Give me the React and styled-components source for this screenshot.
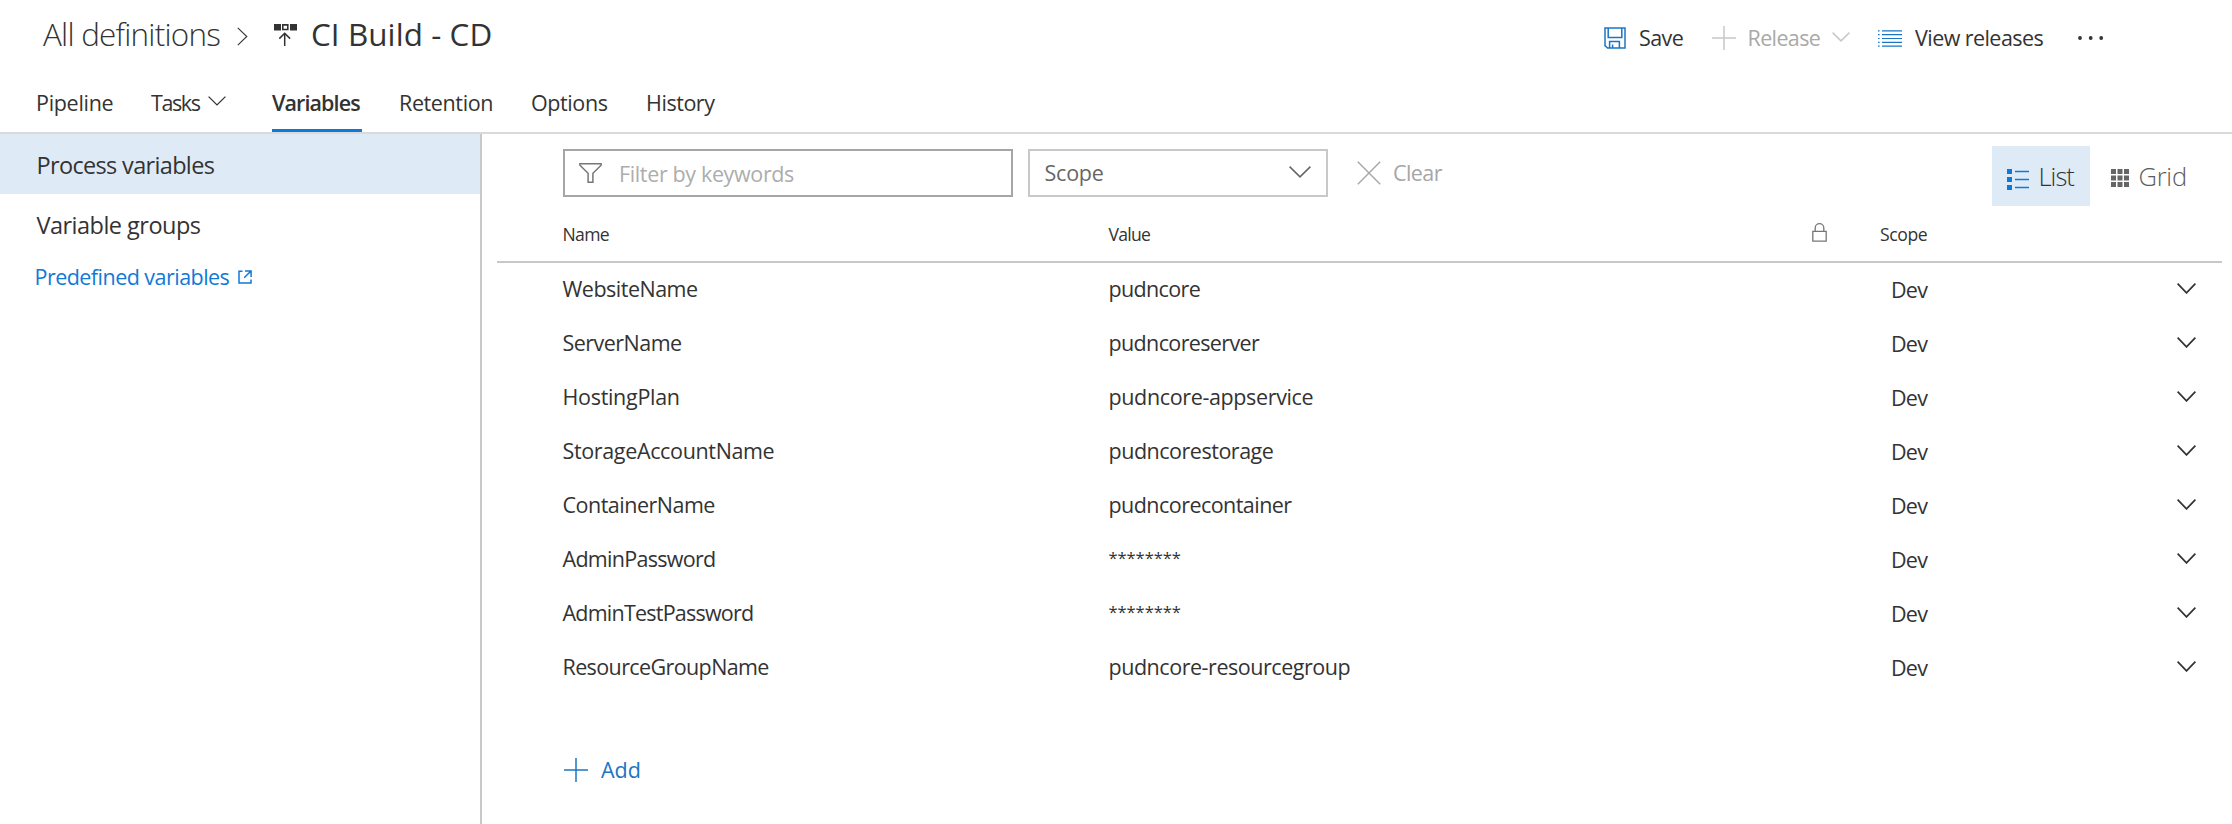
import React from "react";
import styled, { createGlobalStyle, css } from "styled-components";

const GlobalStyle = createGlobalStyle`
  *, *::before, *::after { box-sizing: border-box; }
  body {
    margin: 0;
    background: #fff;
    color: #333;
    font-family: "Open Sans", "Noto Sans", sans-serif;
    font-size: 21.5px;
    line-height: 1.3;
  }
  svg { display: block; flex: none; fill: none; stroke: currentColor; }
`;

const Page = styled.div`
  display: flex;
  flex-direction: column;
  width: 100%;
  height: 824px;
  overflow: hidden;
`;

const Label = styled.span`
  white-space: pre;
  letter-spacing: ${(p) => p.$track || 0}px;
`;

/* ---------- header ---------- */
const TopBar = styled.header`
  display: flex;
  justify-content: space-between;
  height: 72px;
  padding: 0 129px 0 43px;
`;

const Breadcrumb = styled.div`
  display: flex;
  align-items: center;
  height: 69px;
  font-size: 31.4px;
`;

const Crumb = styled(Label)`
  width: 194px;
  font-weight: 300;
`;

const CrumbArrow = styled.span`
  margin-top: 3px;
`;

const PipelineMark = styled.span`
  margin: 0 14px 0 26px;
`;

const Commands = styled.div`
  display: flex;
  align-items: center;
  margin-top: 4px;
`;

const Command = styled.button`
  display: flex;
  align-items: center;
  gap: ${(p) => p.$gap}px;
  width: ${(p) => p.$width}px;
  padding: 0;
  border: 0;
  background: none;
  font: inherit;
  color: ${(p) => (p.$disabled ? "#a9a9a9" : "#333")};
`;

const CommandIcon = styled.span`
  margin-top: ${(p) => p.$drop || 0}px;
  color: ${(p) => p.$color || "#1b75c5"};
`;

const Tabs = styled.nav`
  display: flex;
  gap: 37px;
  height: 62px;
  padding-left: 36px;
  border-bottom: 2px solid #dadada;
`;

const Tab = styled.a`
  display: flex;
  align-items: center;
  width: ${(p) => p.$width}px;
  padding-top: 4px;
  border-bottom: 3px solid transparent;
  ${(p) =>
    p.$active &&
    css`
      font-weight: 600;
      border-color: #1079d8;
    `}
`;

const TabChevron = styled.span`
  margin-left: auto;
  padding: 0 9px 3px 0;
`;

/* ---------- body ---------- */
const Body = styled.div`
  display: flex;
  flex: 1;
  min-height: 0;
`;

const Sidebar = styled.aside`
  width: 482px;
  border-right: 2px solid #c8c8c8;
`;

const SideItem = styled.div`
  display: flex;
  align-items: center;
  height: 60px;
  padding: 3px 0 0 36.5px;
  font-size: 23.5px;
  background: ${(p) => (p.$active ? "#deebf7" : "transparent")};
`;

const SideLink = styled.a`
  display: flex;
  align-items: center;
  gap: 9px;
  height: 46px;
  padding-left: 34.5px;
  color: #1079d8;
`;

const Main = styled.main`
  flex: 1;
  display: flex;
  flex-direction: column;
`;

const Filters = styled.div`
  display: flex;
  height: 72px;
  padding: 12px 24px 0 81px;
`;

const FilterBox = styled.div`
  display: flex;
  align-items: center;
  width: ${(p) => p.$width}px;
  height: 48px;
  margin: 3px 15px 0 0;
  padding: 0 ${(p) => p.$right || 0}px 0 ${(p) => p.$left}px;
  border: 2px solid ${(p) => p.$border};
  color: ${(p) => p.$color};
`;

const Placeholder = styled(Label)`
  margin: 1px 0 0 17px;
  color: #adadad;
`;

const SelectChevron = styled.span`
  margin: 0 0 3px auto;
  color: #666;
`;

const ClearButton = styled.button`
  display: flex;
  align-items: center;
  gap: 12px;
  height: 48px;
  margin: 3px auto 0 14px;
  padding: 0;
  border: 0;
  background: none;
  font: inherit;
  color: #a6a6a6;
`;

const ViewToggle = styled.button`
  display: flex;
  align-items: center;
  width: ${(p) => p.$width}px;
  height: 60px;
  padding: 2px 0 0 ${(p) => p.$left}px;
  border: 0;
  background: ${(p) => (p.$active ? "#deebf7" : "none")};
  font: inherit;
  font-size: 25.5px;
  font-weight: 350;
  color: ${(p) => (p.$active ? "#333" : "#5c5c5c")};
`;

const ToggleIcon = styled.span`
  margin: ${(p) => p.$drop}px 9.5px 0 0;
  color: ${(p) => p.$color};
`;

const columns = css`
  display: grid;
  grid-template-columns: 546px 701.5px 70px 1fr auto;
  align-items: center;
  margin: 0 10px 0 15px;
  padding: 0 26px 0 65.5px;
`;

const HeadRow = styled.div`
  ${columns}
  height: 57px;
  padding-top: 2px;
  border-bottom: 2px solid #c8c8c8;
  font-size: 17.6px;
`;

const LockCell = styled.span`
  padding: 0 0 5px 2px;
  color: #777;
`;

const Row = styled.div`
  ${columns}
  height: 54px;
  padding-bottom: 3px;
`;

const MaskedValue = styled(Label)`
  margin-top: -1px;
  font-size: 16.6px;
`;

const ScopeCell = styled(Label)`
  grid-column: 4;
  padding: 2px 0 0 11px;
`;

const AddButton = styled.button`
  display: flex;
  align-items: center;
  align-self: flex-start;
  gap: 13px;
  height: 48px;
  margin: 51px 0 0 82px;
  padding: 0;
  border: 0;
  background: none;
  font: inherit;
  color: #1b75c5;
`;

/* ---------- icons ---------- */
const Chevron = ({ width, height, stroke = 1.5 }) => (
  <svg width={width} height={height} viewBox={`0 0 ${width} ${height}`} strokeWidth={stroke}>
    <path d={`M.6 .6L${width / 2} ${height - 1.1}L${width - 0.6} .6`} />
  </svg>
);

const CrumbChevron = () => (
  <svg width="11" height="19" viewBox="0 0 11 19" strokeWidth="1.1" stroke="#666">
    <path d="M.8 .8L9.8 9.5L.8 18.2" />
  </svg>
);

const PipelineIcon = () => (
  <svg width="23" height="22" viewBox="0 0 23 22">
    <path d="M0 0h7v6.4H0zM16 0h7v6.4h-7z" fill="#333" stroke="none" />
    <path d="M8.8 .9h5v4.6h-5z" strokeWidth="1.6" />
    <path d="M10.7 22V9.6M5.3 14.6L10.7 9.2L16.1 14.6" strokeWidth="1.5" />
  </svg>
);

const SaveIcon = () => (
  <svg width="22" height="22" viewBox="0 0 22 22" strokeWidth="1.5">
    <path d="M1 1h20v20H3.6L1 18.6z" />
    <path d="M4.2 1v9.5h13.6V1M5.6 21v-6.6h9.8V21M8.6 21v-3.6" />
  </svg>
);

const PlusIcon = ({ stroke = 1.5 }) => (
  <svg width="24" height="24" viewBox="0 0 24 24" strokeWidth={stroke}>
    <path d="M12 0v24M0 12h24" />
  </svg>
);

const LinesIcon = () => (
  <svg width="24" height="17" viewBox="0 0 24 17" strokeWidth="1.2">
    <path d="M0 .9h1.6M4 .9h20M0 4.7h1.6M4 4.7h20M0 8.5h1.6M4 8.5h20M0 12.3h1.6M4 12.3h20M0 16.1h1.6M4 16.1h20" />
  </svg>
);

const MoreIcon = () => (
  <svg width="26" height="4" viewBox="0 0 26 4">
    <g fill="#333" stroke="none">
      <circle cx="2" cy="2" r="1.9" />
      <circle cx="12.7" cy="2" r="1.9" />
      <circle cx="23.2" cy="2" r="1.9" />
    </g>
  </svg>
);

const ExternalIcon = () => (
  <svg width="14" height="14" viewBox="0 0 14 14" strokeWidth="1.5">
    <path d="M4.5 1.2H1V13H13V9.5M7 .9h6.1V7M13 1L6.2 7.8" />
  </svg>
);

const FunnelIcon = () => (
  <svg width="23" height="20" viewBox="0 0 23 20" strokeWidth="1.5" stroke="#777">
    <path d="M.9 .8h21.2v1.4L13.9 10.3v8.9H9.1v-8.9L.9 2.2z" />
  </svg>
);

const CrossIcon = () => (
  <svg width="24" height="24" viewBox="0 0 24 24" strokeWidth="1.4">
    <path d="M.8 .8L23.2 23.2M23.2 .8L.8 23.2" />
  </svg>
);

const ListIcon = () => (
  <svg width="22" height="21" viewBox="0 0 22 21">
    <path d="M0 0h5v5H0zM0 8h5v5H0zM0 16h5v5H0z" fill="currentColor" stroke="none" />
    <path d="M8 2.5h14M8 10.5h14M8 18.5h14" strokeWidth="1.6" />
  </svg>
);

const GridIcon = () => (
  <svg width="18" height="18" viewBox="0 0 18 18">
    <path
      d="M0 0h5v5H0zM6.5 0h5v5h-5zM13 0h5v5h-5zM0 6.5h5v5H0zM6.5 6.5h5v5h-5zM13 6.5h5v5h-5zM0 13h5v5H0zM6.5 13h5v5h-5zM13 13h5v5h-5z"
      fill="currentColor"
      stroke="none"
    />
  </svg>
);

const LockIcon = () => (
  <svg width="15" height="19" viewBox="0 0 15 19" strokeWidth="1.3">
    <path d="M.8 8.4h13.4v9.8H.8zM3.2 8.4V5a4.3 4.3 0 0 1 8.6 0v3.4" />
  </svg>
);

/* ---------- data ---------- */
const tabs = [
  { label: "Pipeline", width: 78, track: -0.3 },
  { label: "Tasks", width: 84, track: -1.4, menu: true },
  { label: "Variables", width: 90, track: -0.9, active: true },
  { label: "Retention", width: 95, track: -0.38 },
  { label: "Options", width: 78, track: -0.4 },
  { label: "History", width: 74, track: -0.45 },
];

const variables = [
  { name: "WebsiteName", nameTrack: -0.5, value: "pudncore", valueTrack: -0.64 },
  { name: "ServerName", nameTrack: -0.53, value: "pudncoreserver", valueTrack: -0.63 },
  { name: "HostingPlan", nameTrack: -0.3, value: "pudncore-appservice", valueTrack: -0.36 },
  { name: "StorageAccountName", nameTrack: -0.35, value: "pudncorestorage", valueTrack: -0.48 },
  { name: "ContainerName", nameTrack: -0.5, value: "pudncorecontainer", valueTrack: -0.54 },
  { name: "AdminPassword", nameTrack: -0.7, masked: true },
  { name: "AdminTestPassword", nameTrack: -0.77, masked: true },
  { name: "ResourceGroupName", nameTrack: -0.61, value: "pudncore-resourcegroup", valueTrack: -0.46 },
];

export default function App() {
  return (
    <Page>
      <GlobalStyle />
      <TopBar>
        <Breadcrumb>
          <Crumb $track={-0.76}>All definitions</Crumb>
          <CrumbArrow>
            <CrumbChevron />
          </CrumbArrow>
          <PipelineMark>
            <PipelineIcon />
          </PipelineMark>
          <Label $track={0.08}>CI Build - CD</Label>
        </Breadcrumb>
        <Commands>
          <Command $width={108} $gap={13}>
            <CommandIcon>
              <SaveIcon />
            </CommandIcon>
            <Label $track={-0.6}>Save</Label>
          </Command>
          <Command $width={166} $gap={11.5} $disabled>
            <CommandIcon $color="#c8c8c8">
              <PlusIcon />
            </CommandIcon>
            <Label $track={-0.63}>Release</Label>
            <CommandIcon $color="#c8c8c8" $drop={-2}>
              <Chevron width={18} height={10} />
            </CommandIcon>
          </Command>
          <Command $width={200} $gap={13}>
            <CommandIcon>
              <LinesIcon />
            </CommandIcon>
            <Label $track={-0.56}>View releases</Label>
          </Command>
          <Command $width={25} $gap={0}>
            <MoreIcon />
          </Command>
        </Commands>
      </TopBar>
      <Tabs>
        {tabs.map((t) => (
          <Tab key={t.label} $width={t.width} $active={t.active}>
            <Label $track={t.track}>{t.label}</Label>
            {t.menu && (
              <TabChevron>
                <Chevron width={18} height={10} stroke={1.3} />
              </TabChevron>
            )}
          </Tab>
        ))}
      </Tabs>
      <Body>
        <Sidebar>
          <SideItem $active>
            <Label $track={-0.66}>Process variables</Label>
          </SideItem>
          <SideItem>
            <Label $track={-0.52}>Variable groups</Label>
          </SideItem>
          <SideLink>
            <Label $track={-0.53}>Predefined variables</Label>
            <ExternalIcon />
          </SideLink>
        </Sidebar>
        <Main>
          <Filters>
            <FilterBox $width={450} $left={14} $border="#a6a6a6" $color="#777">
              <FunnelIcon />
              <Placeholder $track={-0.36}>Filter by keywords</Placeholder>
            </FilterBox>
            <FilterBox $width={300} $left={14.5} $right={15} $border="#c8c8c8" $color="#666">
              <Label $track={-0.23}>Scope</Label>
              <SelectChevron>
                <Chevron width={22} height={12} />
              </SelectChevron>
            </FilterBox>
            <ClearButton>
              <CrossIcon />
              <Label $track={-0.58}>Clear</Label>
            </ClearButton>
            <ViewToggle $active $width={98} $left={15}>
              <ToggleIcon $color="#1079d8" $drop={4}>
                <ListIcon />
              </ToggleIcon>
              <Label $track={-0.97}>List</Label>
            </ViewToggle>
            <ViewToggle $width={118} $left={21}>
              <ToggleIcon $color="#666" $drop={1}>
                <GridIcon />
              </ToggleIcon>
              <Label $track={-0.25}>Grid</Label>
            </ViewToggle>
          </Filters>
          <HeadRow>
            <Label $track={-0.65}>Name</Label>
            <Label $track={-0.75}>Value</Label>
            <LockCell>
              <LockIcon />
            </LockCell>
            <Label $track={-0.42}>Scope</Label>
          </HeadRow>
          {variables.map((v) => (
            <Row key={v.name}>
              <Label $track={v.nameTrack}>{v.name}</Label>
              {v.masked ? (
                <MaskedValue $track={-0.1}>********</MaskedValue>
              ) : (
                <Label $track={v.valueTrack}>{v.value}</Label>
              )}
              <ScopeCell $track={-0.75}>Dev</ScopeCell>
              <Chevron width={19} height={11} stroke={1.7} />
            </Row>
          ))}
          <AddButton>
            <PlusIcon />
            <Label>Add</Label>
          </AddButton>
        </Main>
      </Body>
    </Page>
  );
}
